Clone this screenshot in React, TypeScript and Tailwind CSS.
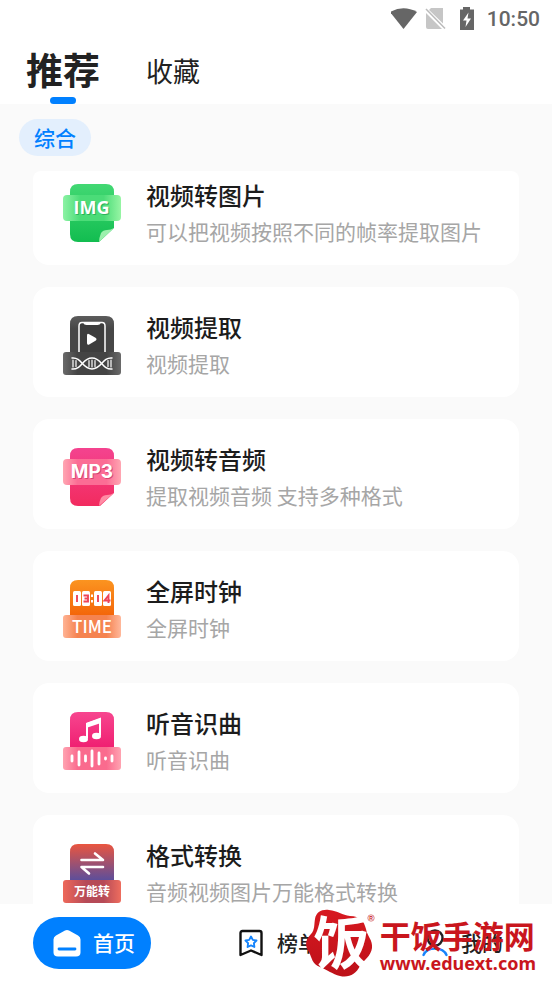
import React from 'react';

interface Tool {
  title: string;
  description: string;
  icon: React.ReactNode;
}

interface NavItemProps {
  label: string;
  icon: React.ReactNode;
  active?: boolean;
}

const ImgIcon = () => (
  <svg viewBox="0 0 60 60" className="size-[60px] shrink-0" aria-hidden="true">
    <defs>
      <linearGradient id="img-back" x1="0" y1="0" x2="0" y2="1">
        <stop offset="0" stopColor="#42d873" />
        <stop offset="1" stopColor="#12bd50" />
      </linearGradient>
      <linearGradient id="img-band" x1="0" y1="0" x2="1" y2="0">
        <stop offset="0" stopColor="#8cf2a4" />
        <stop offset="0.3" stopColor="#4bdc78" />
        <stop offset="0.7" stopColor="#4bdc78" />
        <stop offset="1" stopColor="#97f5a4" />
      </linearGradient>
    </defs>
    <path d="M16 1H44Q52 1 52 9V45L37 59H16Q8 59 8 51V9Q8 1 16 1Z" fill="url(#img-back)" />
    <path d="M52 45L37 59Q37 55 39 50Q41 47 45 47Q49 47 52 45Z" fill="#9cf0ad" />
    <rect x="1" y="12" width="58" height="26" rx="4" fill="url(#img-band)" />
    <text x="30.5" y="32" textAnchor="middle" fontFamily="Open Sans, sans-serif" fontWeight="700" fontSize="18" fill="#159447" opacity="0.6">IMG</text>
    <text x="29.5" y="31" textAnchor="middle" fontFamily="Open Sans, sans-serif" fontWeight="700" fontSize="18" fill="#fff">IMG</text>
  </svg>
);

const ExtractIcon = () => (
  <svg viewBox="0 0 60 60" className="size-[60px] shrink-0" aria-hidden="true">
    <defs>
      <linearGradient id="dna-back" x1="0" y1="0" x2="0" y2="1">
        <stop offset="0" stopColor="#5c5c5c" />
        <stop offset="0.3" stopColor="#474747" />
        <stop offset="1" stopColor="#474747" />
      </linearGradient>
      <linearGradient id="dna-band" x1="0" y1="0" x2="1" y2="0">
        <stop offset="0" stopColor="#6a6a6a" />
        <stop offset="0.25" stopColor="#444" />
        <stop offset="0.75" stopColor="#444" />
        <stop offset="1" stopColor="#6a6a6a" />
      </linearGradient>
    </defs>
    <path d="M16 1H44Q52 1 52 9V44H8V9Q8 1 16 1Z" fill="url(#dna-back)" />
    <path d="M17 37V11Q17 7.500 20 7.500H40Q43 7.500 43 11V37" fill="#3d3d3d" stroke="#fff" strokeWidth="1.500" />
    <path d="M21 7.500H39Q38 10 35.500 10H24.500Q22 10 21 7.500Z" fill="#fff" />
    <path d="M25 20.500Q25 18 27.200 19.200L33.500 22.800Q35.500 24.300 33.500 25.800L27.200 29.400Q25 30.400 25 28Z" fill="#fff" />
    <rect x="1" y="37" width="58" height="23" rx="3" fill="url(#dna-band)" />
    <g fill="none" stroke="#fff" strokeWidth="1.500" strokeLinecap="round">
      <path d="M10 43C20 42 20 54 30 54S40 42 50 43" />
      <path d="M10 54C20 55 20 43 30 43S40 55 50 54" />
      <path d="M11 45V52M14 45.500V51.500M27 45.500V51.500M30 45V52M33 45.500V51.500M46 45.500V51.500M49 45V52" strokeWidth="1.200" />
    </g>
  </svg>
);

const Mp3Icon = () => (
  <svg viewBox="0 0 60 60" className="size-[60px] shrink-0" aria-hidden="true">
    <defs>
      <linearGradient id="mp3-back" x1="0" y1="0" x2="0" y2="1">
        <stop offset="0" stopColor="#f4438f" />
        <stop offset="1" stopColor="#f22b5f" />
      </linearGradient>
      <linearGradient id="mp3-band" x1="0" y1="0" x2="1" y2="0">
        <stop offset="0" stopColor="#ffa6b2" />
        <stop offset="0.25" stopColor="#fb6d95" />
        <stop offset="0.75" stopColor="#fb6d95" />
        <stop offset="1" stopColor="#ffa6b2" />
      </linearGradient>
    </defs>
    <path d="M16 1H44Q52 1 52 9V46L38 59H16Q8 59 8 51V9Q8 1 16 1Z" fill="url(#mp3-back)" />
    <path d="M52 46L37 59Q37 55 39 51Q41 48 45 48Q49 48 52 46Z" fill="#ff8ba4" />
    <rect x="1" y="12" width="58" height="26" rx="4" fill="url(#mp3-band)" />
    <text x="31" y="32" textAnchor="middle" fontFamily="Inter, sans-serif" fontWeight="700" fontSize="19" fill="#c2255c" opacity="0.6">MP3</text>
    <text x="30" y="31" textAnchor="middle" fontFamily="Inter, sans-serif" fontWeight="700" fontSize="19" fill="#fff">MP3</text>
  </svg>
);

const ClockIcon = () => (
  <svg viewBox="0 0 60 60" className="size-[60px] shrink-0" aria-hidden="true">
    <defs>
      <linearGradient id="clock-back" x1="0" y1="0" x2="0" y2="1">
        <stop offset="0" stopColor="#fb9420" />
        <stop offset="1" stopColor="#f25c05" />
      </linearGradient>
      <linearGradient id="clock-band" x1="0" y1="0" x2="1" y2="0">
        <stop offset="0" stopColor="#ffb394" />
        <stop offset="0.25" stopColor="#f58350" />
        <stop offset="0.75" stopColor="#f58350" />
        <stop offset="1" stopColor="#ffb89b" />
      </linearGradient>
    </defs>
    <path d="M16 1H44Q52 1 52 9V44H8V9Q8 1 16 1Z" fill="url(#clock-back)" />
    <g fill="#fff">
      <rect x="11" y="12" width="8" height="15" rx="1.500" />
      <rect x="20" y="12" width="8" height="15" rx="1.500" />
      <rect x="32" y="12" width="8" height="15" rx="1.500" />
      <rect x="41" y="12" width="8" height="15" rx="1.500" />
      <rect x="29" y="15.500" width="2" height="2.500" />
      <rect x="29" y="21" width="2" height="2.500" />
    </g>
    <g fill="none" stroke="#ee4458" strokeWidth="1.900">
      <path d="M15 16V23M36 16V23" />
      <path d="M21.500 16.500H26V22.500H21.500M22.500 19.500H26" />
      <path d="M46.500 24V16.500L42.500 21.500H48.500" />
    </g>
    <rect x="1" y="36" width="58" height="23" rx="3" fill="url(#clock-band)" />
    <text x="30" y="54" textAnchor="middle" fontFamily="Noto Sans CJK SC, sans-serif" fontWeight="500" fontSize="17" fill="#fff">TIME</text>
  </svg>
);

const MusicIcon = () => (
  <svg viewBox="0 0 60 60" className="size-[60px] shrink-0" aria-hidden="true">
    <defs>
      <linearGradient id="music-back" x1="0" y1="0" x2="0" y2="1">
        <stop offset="0" stopColor="#f7468f" />
        <stop offset="1" stopColor="#ee176b" />
      </linearGradient>
      <linearGradient id="music-band" x1="0" y1="0" x2="1" y2="0">
        <stop offset="0" stopColor="#ffa3b1" />
        <stop offset="0.25" stopColor="#fa6b8e" />
        <stop offset="0.75" stopColor="#fa6b8e" />
        <stop offset="1" stopColor="#ffa3b1" />
      </linearGradient>
    </defs>
    <path d="M16 1H44Q52 1 52 9V44H8V9Q8 1 16 1Z" fill="url(#music-back)" />
    <path d="M25 27V13L38 8.500V24" fill="none" stroke="#fff" strokeWidth="2" />
    <path d="M24 12L39 6.500V12L24 17Z" fill="#fff" />
    <ellipse cx="21.500" cy="28" rx="4.500" ry="3.200" fill="#fff" />
    <ellipse cx="34.500" cy="25" rx="4.500" ry="3.200" fill="#fff" />
    <rect x="1" y="36" width="58" height="23" rx="3" fill="url(#music-band)" />
    <path
      d="M10 45V50M17 41V54M23.500 45V50M30 40V55M37 42V53M43.500 47V48M50 45V50"
      fill="none"
      stroke="#fff"
      strokeWidth="2.800"
      strokeLinecap="round"
    />
  </svg>
);

const ConvertIcon = () => (
  <svg viewBox="0 0 60 60" className="size-[60px] shrink-0" aria-hidden="true">
    <defs>
      <linearGradient id="convert-back" x1="0" y1="0" x2="0" y2="1">
        <stop offset="0" stopColor="#ea553f" />
        <stop offset="0.850" stopColor="#5b4e9c" />
      </linearGradient>
      <linearGradient id="convert-band" x1="0" y1="0" x2="1" y2="0">
        <stop offset="0" stopColor="#ee685a" />
        <stop offset="0.4" stopColor="#b64a57" />
        <stop offset="0.7" stopColor="#b64a57" />
        <stop offset="1" stopColor="#ee6d5e" />
      </linearGradient>
    </defs>
    <path d="M16 1H44Q52 1 52 9V44H8V9Q8 1 16 1Z" fill="url(#convert-back)" />
    <path
      d="M19.500 17H41L33 10.500M41 24H19.500L27 30.500"
      fill="none"
      stroke="#fff"
      strokeWidth="2.600"
      strokeLinecap="round"
      strokeLinejoin="round"
    />
    <rect x="1" y="37" width="58" height="23" rx="3" fill="url(#convert-band)" />
    <text x="30" y="53" textAnchor="middle" fontFamily="Noto Sans CJK SC, sans-serif" fontWeight="700" fontSize="12" fill="#fff">万能转</text>
  </svg>
);

const HomeIcon = () => (
  <svg viewBox="0 0 28 28" className="size-7" aria-hidden="true">
    <path d="M12 1.600Q14 0.400 16 1.600L25 6.600Q27.500 8 27.500 10.500V23.500Q27.500 27.500 23 27.500H5Q0.500 27.500 0.500 23.500V10.500Q0.500 8 3 6.600Z" fill="#fff" />
    <path d="M6 20H22" stroke="#0080ff" strokeWidth="2.800" strokeLinecap="round" />
  </svg>
);

const RankIcon = () => (
  <svg viewBox="0 0 28 28" className="size-7" fill="none" strokeLinejoin="round" aria-hidden="true">
    <path d="M5.500 2H22.500Q24.500 2 24.500 4V26L14 21.500L3.500 26V4Q3.500 2 5.500 2Z" stroke="#111" strokeWidth="2.400" />
    <path d="M14 7.500L15.800 10.900L19.500 11.500L16.900 14.200L17.400 18L14 16.400L10.600 18L11.100 14.200L8.500 11.500L12.200 10.900Z" stroke="#1684fb" strokeWidth="1.900" />
  </svg>
);

const UserIcon = () => (
  <svg viewBox="0 0 28 28" className="size-7" fill="none" strokeLinecap="round" aria-hidden="true">
    <circle cx="14" cy="9" r="7.500" stroke="#222" strokeWidth="2.400" />
    <path d="M2.500 26C6 17.500 22 17.500 25.500 26" stroke="#1684fb" strokeWidth="2.400" />
  </svg>
);

const tools: Tool[] = [
  { title: '视频转图片', description: '可以把视频按照不同的帧率提取图片', icon: <ImgIcon /> },
  { title: '视频提取', description: '视频提取', icon: <ExtractIcon /> },
  { title: '视频转音频', description: '提取视频音频 支持多种格式', icon: <Mp3Icon /> },
  { title: '全屏时钟', description: '全屏时钟', icon: <ClockIcon /> },
  { title: '听音识曲', description: '听音识曲', icon: <MusicIcon /> },
  { title: '格式转换', description: '音频视频图片万能格式转换', icon: <ConvertIcon /> },
];

const StatusBar = () => (
  <div className="flex h-[38px] items-center justify-end px-3 text-[#666]">
    <svg viewBox="0 0 88 24" className="mr-2 h-6 w-[88px]" aria-hidden="true">
      <path d="M-1 5Q12.500 -2.500 26 5L12.500 22Z" fill="#666" />
      <path d="M40 1H52V16.500L38 3ZM35 6L51 22H37Q35 22 35 20Z" fill="#c6c6c6" />
      <path d="M35 2L54 21.500" stroke="#bbb" strokeWidth="1.500" />
      <path d="M72 0H79V2.500H83V23H69V2.500H72Z" fill="#666" />
      <path d="M77.500 5.500L72 13.500H75.500L74.500 20L80 11.500H76.500Z" fill="#fff" />
    </svg>
    <span className="font-['Roboto',sans-serif] text-[21px] leading-6 font-medium">10:50</span>
  </div>
);

const ToolCard: React.FC<Tool> = ({ title, description, icon }) => (
  <li>
    <a href="#" className="flex items-center gap-6 rounded-2xl bg-white pt-[22px] pr-4 pb-4 pl-[29px]">
      {icon}
      <div className="min-w-0 whitespace-nowrap">
        <h2 className="text-[24px] leading-9 font-medium text-[#1c1c1c]">{title}</h2>
        <p className="text-[21px] leading-9 text-[#a6a6a6]">{description}</p>
      </div>
    </a>
  </li>
);

const NavItem: React.FC<NavItemProps> = ({ label, icon, active }) => (
  <button
    type="button"
    className={`flex h-[52px] items-center gap-3 rounded-full px-5 pr-4 text-[21px] font-medium ${
      active ? 'bg-[#0080ff] text-white' : 'text-[#222]'
    }`}
  >
    {icon}
    {label}
  </button>
);

const Watermark = () => (
  <div className="pointer-events-none absolute right-4 bottom-0 flex items-center text-[#c9161d]">
    <svg viewBox="0 0 76 76" className="size-[76px]" aria-hidden="true">
      <defs>
        <linearGradient id="seal" x1="0" y1="0" x2="0" y2="1">
          <stop offset="0" stopColor="#d71920" />
          <stop offset="1" stopColor="#bd1119" />
        </linearGradient>
      </defs>
      <path
        d="M11 14C12 7 18 4 25 5C34 6 38 10 46 11C56 11 60 16 62 24C63 31 69 35 68 43C67 51 60 55 56 61C52 69 45 73 36 71C28 69 24 65 16 62C8 59 8 53 5 47C0 40 2 34 7 29C11 25 10 19 11 14Z"
        fill="url(#seal)"
      />
      <text x="38" y="59" textAnchor="middle" fontFamily="Noto Sans CJK SC, sans-serif" fontWeight="700" fontSize="57" fill="#fff">饭</text>
      <circle cx="67" cy="13" r="3.200" fill="none" stroke="#d4676b" strokeWidth="0.800" />
      <text x="67" y="15" textAnchor="middle" fontFamily="Liberation Sans, sans-serif" fontWeight="700" fontSize="5" fill="#c9161d">R</text>
    </svg>
    <div className="pt-2">
      <p className="text-[31px] leading-8 font-bold">干饭手游网</p>
      <p className="font-['Noto_Sans',sans-serif] text-[18px] leading-6 font-bold">www.eduext.com</p>
    </div>
  </div>
);

export default function App() {
  return (
    <div className="relative flex h-screen flex-col overflow-hidden bg-[#fafafa] font-['Noto_Sans_CJK_SC',sans-serif]">
      {/* Header Section */}
      <header className="bg-white">
        <StatusBar />
        <div className="flex h-[66px] items-end gap-[46px] px-[26px]">
          <button type="button" className="flex flex-col items-center text-[37px] leading-[55px] font-bold text-[#222]">
            推荐
            <span className="h-[7px] w-[26px] rounded-full bg-[#0080ff]" />
          </button>
          <button type="button" className="text-[27px] leading-[66px] text-[#222]">
            收藏
          </button>
        </div>
      </header>

      {/* Category Filter */}
      <div className="flex px-[19px] py-[15px]">
        <button type="button" className="h-[37px] rounded-full bg-[#e3effd] px-[15px] text-[21px] leading-[37px] font-medium text-[#0080ff]">
          综合
        </button>
      </div>

      {/* Tool List */}
      <main className="mx-[33px] min-h-0 flex-1 overflow-hidden rounded-t-lg">
        <ul className="-mt-4 flex flex-col gap-[22px]">
          {tools.map((tool) => (
            <ToolCard key={tool.title} {...tool} />
          ))}
        </ul>
      </main>

      {/* Bottom Navigation */}
      <nav className="flex h-[77px] shrink-0 items-center justify-between bg-white px-[33px]">
        <NavItem label="首页" icon={<HomeIcon />} active />
        <NavItem label="榜单" icon={<RankIcon />} />
        <NavItem label="我的" icon={<UserIcon />} />
      </nav>

      <Watermark />
    </div>
  );
}
